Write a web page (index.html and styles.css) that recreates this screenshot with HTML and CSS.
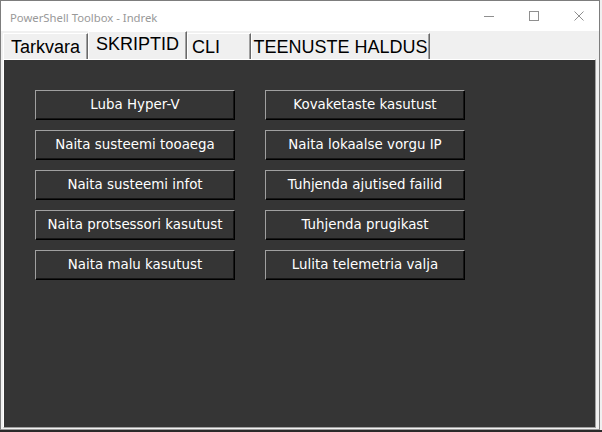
FILE: index.html
```html
<!DOCTYPE html>
<html>
<head>
<meta charset="utf-8">
<link rel="stylesheet" href="styles.css">
</head>
<body>
<div class="window">
  <div class="titlebar">
    <span class="title">PowerShell Toolbox - Indrek</span>
    <div class="controls">
      <svg class="ctl" width="10" height="10" viewBox="0 0 10 10"><line x1="0" y1="5.5" x2="10" y2="5.5" stroke="#8f8f8f" stroke-width="1"/></svg>
      <svg class="ctl" width="10" height="10" viewBox="0 0 10 10"><rect x="0.5" y="0.5" width="9" height="9" fill="none" stroke="#8f8f8f" stroke-width="1"/></svg>
      <svg class="ctl" width="10" height="10" viewBox="0 0 10 10"><path d="M0.5 0.5 L9.5 9.5 M9.5 0.5 L0.5 9.5" stroke="#8f8f8f" stroke-width="1" fill="none"/></svg>
    </div>
  </div>
  <div class="tabcontrol">
    <div class="tabstrip">
      <div class="tab tab-tarkvara">Tarkvara</div>
      <div class="tab tab-selected tab-skriptid">SKRIPTID</div>
      <div class="tab tab-cli">CLI</div>
      <div class="tab tab-teenused">TEENUSTE HALDUS</div>
    </div>
    <div class="page">
      <div class="grid">
        <button class="btn">Luba Hyper-V</button>
        <button class="btn">Kovaketaste kasutust</button>
        <button class="btn">Naita susteemi tooaega</button>
        <button class="btn">Naita lokaalse vorgu IP</button>
        <button class="btn">Naita susteemi infot</button>
        <button class="btn">Tuhjenda ajutised failid</button>
        <button class="btn">Naita protsessori kasutust</button>
        <button class="btn">Tuhjenda prugikast</button>
        <button class="btn">Naita malu kasutust</button>
        <button class="btn">Lulita telemetria valja</button>
      </div>
    </div>
  </div>
</div>
<div class="desktop-strip"></div>
</body>
</html>
```

FILE: styles.css
```css
html, body {
  margin: 0;
  padding: 0;
}
body {
  width: 602px;
  height: 432px;
  background: #f0f0f0;
  overflow: hidden;
}
.window {
  box-sizing: border-box;
  width: 600px;
  height: 430px;
  border: 1px solid #7d7d7d;
  border-bottom-color: #9a9a9a;
  background: #f0f0f0;
  display: flex;
  flex-direction: column;
}
.desktop-strip {
  height: 2px;
  background: #2a2a2a;
}
.titlebar {
  height: 30px;
  flex: none;
  background: #ffffff;
  display: flex;
  align-items: center;
  justify-content: space-between;
}
.title {
  padding-left: 9px;
  font-family: "Noto Sans", "Open Sans", sans-serif;
  font-size: 11.3px;
  color: #999999;
  position: relative;
  top: 1px;
}
.controls {
  display: flex;
  align-items: center;
  gap: 35px;
  margin-right: 15px;
}
.ctl {
  display: block;
}
.tabcontrol {
  margin: 0 3px 0 2px;
  display: flex;
  flex-direction: column;
  flex: none;
}
.tabstrip {
  height: 28px;
  display: flex;
  align-items: flex-end;
}
.tab {
  box-sizing: border-box;
  height: 26px;
  padding-top: 3px;
  background: #f0f0f0;
  border-left: 1px solid #ffffff;
  border-top: 1px solid #ffffff;
  border-right: 1px solid #696969;
  box-shadow: inset -1px 0 0 #a0a0a0;
  font-family: "Liberation Sans", Arial, sans-serif;
  font-size: 18px;
  line-height: 20px;
  color: #000000;
  text-align: center;
  white-space: nowrap;
}
.tab-tarkvara { width: 85px; }
.tab-skriptid { width: 99px; }
.tab-cli { width: 64px; text-align: left; padding-left: 4px; }
.tab-teenused { width: 179px; }
.tab-selected {
  height: 28px;
  padding-top: 2px;
  position: relative;
  z-index: 1;
}
.page {
  box-sizing: border-box;
  height: 369px;
  background: #353535;
  border-left: 1px solid #ffffff;
  border-top: 1px solid #ffffff;
  border-right: 1px solid #a0a0a0;
  border-bottom: 1px solid #a0a0a0;
  padding: 30px 0 0 31px;
}
.grid {
  display: grid;
  grid-template-columns: 200px 200px;
  grid-auto-rows: 30px;
  column-gap: 30px;
  row-gap: 10px;
}
.btn {
  box-sizing: border-box;
  margin: 0;
  padding: 0;
  width: 200px;
  height: 30px;
  background: #353535;
  border-top: 1px solid #a0a0a0;
  border-left: 1px solid #a0a0a0;
  border-right: 1px solid #000000;
  border-bottom: 1px solid #000000;
  box-shadow: inset -1px -1px 0 #161616;
  color: #ffffff;
  font-family: "DejaVu Sans", Verdana, sans-serif;
  font-size: 13.4px;
  text-align: center;
  line-height: 26px;
}
```
